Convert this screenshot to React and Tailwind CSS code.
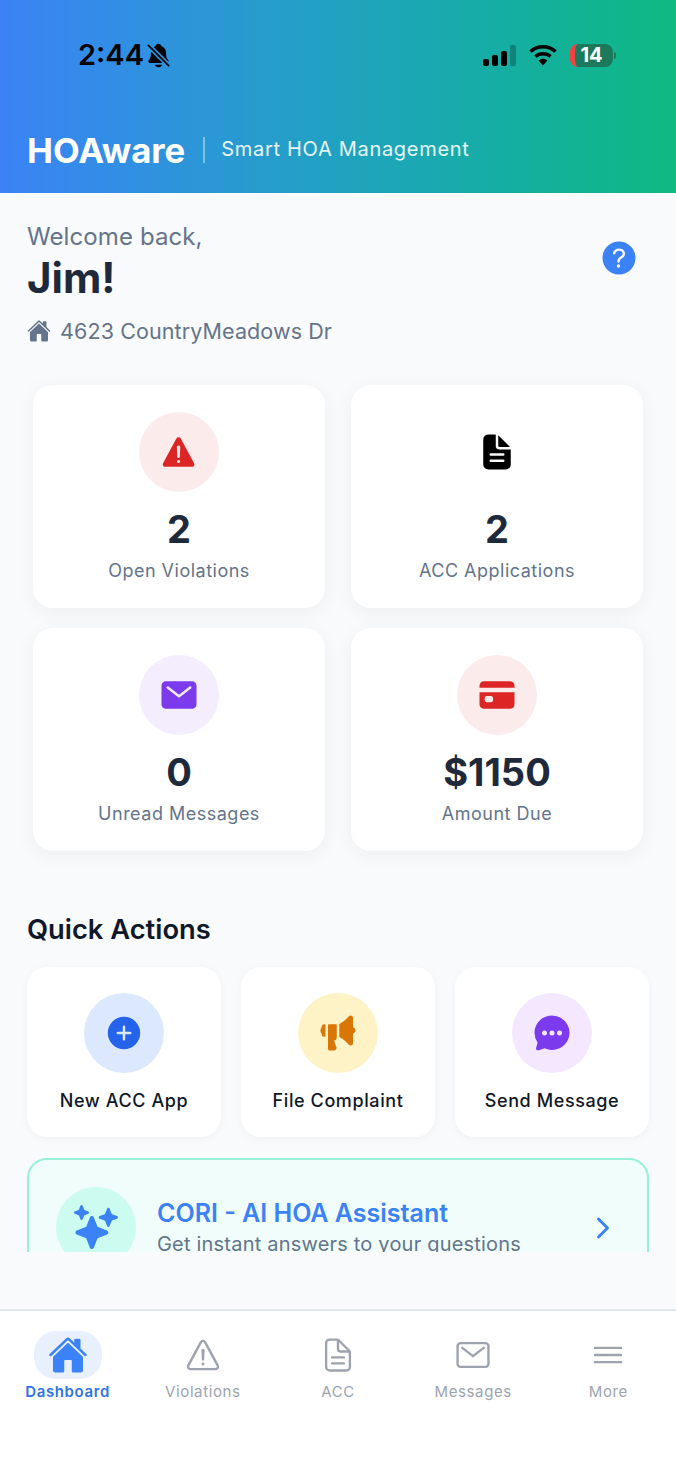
import {
  IoAddCircle,
  IoCard,
  IoChatbubbleEllipses,
  IoChevronForward,
  IoDocumentText,
  IoDocumentTextOutline,
  IoHelpCircle,
  IoHome,
  IoMail,
  IoMailOutline,
  IoMegaphone,
  IoMenuOutline,
  IoNotificationsOff,
  IoSparkles,
  IoWarning,
  IoWarningOutline,
} from "react-icons/io5";

const stats = [
  { icon: IoWarning, circle: "bg-[#fcebeb]", color: "text-[#dc2626]", value: "2", label: "Open Violations" },
  { icon: IoDocumentText, circle: "bg-white", color: "text-black", value: "2", label: "ACC Applications" },
  { icon: IoMail, circle: "bg-[#f3edfd]", color: "text-[#7c3aed]", value: "0", label: "Unread Messages" },
  { icon: IoCard, circle: "bg-[#fcebeb]", color: "text-[#dc2626]", value: "$1150", label: "Amount Due" },
];

const actions = [
  { icon: IoAddCircle, circle: "bg-[#dbe8fe]", color: "text-[#2563eb]", label: "New ACC App" },
  { icon: IoMegaphone, circle: "bg-[#fef3c7]", color: "text-[#d97706]", label: "File Complaint" },
  { icon: IoChatbubbleEllipses, circle: "bg-[#f3e8ff]", color: "text-[#7c3aed]", label: "Send Message" },
];

const tabs = [
  { icon: IoHome, label: "Dashboard", active: true },
  { icon: IoWarningOutline, label: "Violations" },
  { icon: IoDocumentTextOutline, label: "ACC" },
  { icon: IoMailOutline, label: "Messages" },
  { icon: IoMenuOutline, label: "More" },
];

function WifiIcon() {
  return (
    <svg width="28" height="22" viewBox="0 0 28 22" className="text-black">
      <path d="M1.5 7.5C8.5 1.2 19.5 1.2 26.5 7.5" fill="none" stroke="currentColor" strokeWidth="3.6" />
      <path d="M6.5 12.5C10.8 8.8 17.2 8.8 21.5 12.5" fill="none" stroke="currentColor" strokeWidth="3.6" />
      <path d="M9.6 16.4C12.2 14.3 15.8 14.3 18.4 16.4L14 21.5Z" fill="currentColor" />
    </svg>
  );
}

function StatusBar() {
  return (
    <div className="flex items-center justify-between pl-[78px] pr-[60px] pt-[38px]">
      <div className="flex items-center gap-[1px] text-black">
        <span className="text-[29px] leading-[34px] font-semibold">2:44</span>
        <IoNotificationsOff size={27} />
      </div>
      <div className="flex items-center gap-[13px]">
        <div className="flex items-end gap-[3px]">
          <span className="h-[7px] w-[6px] rounded-[2px] bg-black" />
          <span className="h-[11px] w-[6px] rounded-[2px] bg-black" />
          <span className="h-[15px] w-[6px] rounded-[2px] bg-black" />
          <span className="h-[21px] w-[6px] rounded-[2px] bg-black/25" />
        </div>
        <WifiIcon />
        <div className="flex items-center gap-[1px]">
          <div className="flex h-[23px] w-[43px] items-center justify-center overflow-hidden rounded-[8px] border-l-[5px] border-[#ef4444] bg-[#1c7a5c] pr-[5px] text-[20px] leading-none font-bold text-white">
            14
          </div>
          <span className="h-[7px] w-[2px] rounded-r-full bg-[#1c7a5c]" />
        </div>
      </div>
    </div>
  );
}

function Header() {
  return (
    <div className="h-[193px] shrink-0 bg-gradient-to-r from-[#3b82f6] to-[#10b981]">
      <StatusBar />
      <div className="mt-[56px] flex items-center px-[27px]">
        <span className="text-[34.7px] leading-[44px] font-bold text-white">HOAware</span>
        <span className="ml-[18px] mr-[16px] h-[26px] w-[2px] bg-white/40" />
        <span className="-mt-[2px] text-[20px] leading-[28px] tracking-[0.7px] text-white/90">Smart HOA Management</span>
      </div>
    </div>
  );
}

function StatCard({ item }) {
  const Icon = item.icon;
  return (
    <div className="flex h-[223px] flex-col items-center rounded-[20px] bg-white pt-[27px] shadow-[0_4px_20px_rgba(0,0,0,0.05)]">
      <div className={`flex h-[80px] w-[80px] items-center justify-center rounded-full ${item.circle}`}>
        <Icon size={40} className={item.color} />
      </div>
      <div className="mt-[15px] text-[38px] leading-[44px] font-bold text-[#1e293b]">{item.value}</div>
      <div className="mt-[8px] text-[18px] leading-[24px] tracking-[0.5px] text-[#64748b]">{item.label}</div>
    </div>
  );
}

function ActionCard({ item }) {
  const Icon = item.icon;
  return (
    <div className="flex h-[170px] flex-col items-center rounded-[20px] bg-white pt-[26px] shadow-[0_2px_10px_rgba(0,0,0,0.04)]">
      <div className={`flex h-[80px] w-[80px] items-center justify-center rounded-full ${item.circle}`}>
        <Icon size={40} className={item.color} />
      </div>
      <div className="mt-[16px] text-[18px] leading-[24px] font-medium tracking-[0.6px] text-[#111827]">{item.label}</div>
    </div>
  );
}

function TabBar() {
  return (
    <div className="grid h-[162px] shrink-0 grid-cols-5 border-t-2 border-[#e2e8f0] bg-white pt-[20px]">
      {tabs.map((tab) => {
        const Icon = tab.icon;
        return (
          <div key={tab.label} className="flex flex-col items-center">
            <div className={`flex h-[48px] w-[68px] items-center justify-center rounded-[22px] ${tab.active ? "bg-[#e8f0fe] text-[#3b82f6]" : "text-[#9ca3af]"}`}>
              <Icon size={tab.active ? 40 : 38} />
            </div>
            <span className={`mt-[3px] text-[15px] leading-[20px] tracking-[0.6px] ${tab.active ? "font-semibold text-[#2f74e0]" : "text-[#9ca3af]"}`}>
              {tab.label}
            </span>
          </div>
        );
      })}
    </div>
  );
}

export default function App() {
  return (
    <div className="flex h-[1471px] w-[676px] flex-col overflow-hidden bg-[#f9fafb] font-['Inter',sans-serif]">
      <Header />

      <div className="h-[1059px] shrink-0 overflow-hidden">
        <div className="flex items-start justify-between pl-[27px] pr-[35px] pt-[29px]">
          <div>
            <div className="text-[24px] leading-[30px] tracking-[0.1px] text-[#64748b]">Welcome back,</div>
            <div className="mt-[1px] text-[42px] leading-[50px] font-bold text-[#1e293b]">Jim!</div>
            <div className="mt-[14px] flex items-center gap-[9px] text-[#64748b]">
              <IoHome size={24} />
              <span className="text-[21.5px] leading-[28px] tracking-[0.1px]">4623 CountryMeadows Dr</span>
            </div>
          </div>
          <IoHelpCircle size={44} className="mt-[14px] text-[#3b82f6]" />
        </div>

        <div className="mt-[40px] grid grid-cols-2 gap-x-[26px] gap-y-[20px] px-[33px]">
          {stats.map((item) => (
            <StatCard key={item.label} item={item} />
          ))}
        </div>

        <div className="mt-[61px] px-[27px] text-[27.3px] leading-[36px] font-semibold text-[#0f172a]">Quick Actions</div>

        <div className="mt-[19px] grid grid-cols-3 gap-[20px] px-[27px]">
          {actions.map((item) => (
            <ActionCard key={item.label} item={item} />
          ))}
        </div>

        <div className="mx-[27px] mt-[21px] flex h-[138px] items-center rounded-[20px] border-2 border-[#99f0d8] bg-[#f0fdfa] pl-[27px] pr-[28px]">
          <div className="flex h-[80px] w-[80px] shrink-0 items-center justify-center rounded-full bg-[#ccfbef]">
            <IoSparkles size={44} className="text-[#3b82f6]" />
          </div>
          <div className="ml-[21px] flex-1">
            <div className="text-[25px] leading-[32px] font-semibold text-[#3b82f6]">CORI - AI HOA Assistant</div>
            <div className="mt-[2px] text-[20px] leading-[26px] tracking-[0.2px] text-[#64748b]">Get instant answers to your questions</div>
          </div>
          <IoChevronForward size={32} className="mt-[1px] text-[#3b82f6]" />
        </div>
      </div>

      <div className="flex-1" />
      <TabBar />
    </div>
  );
}
